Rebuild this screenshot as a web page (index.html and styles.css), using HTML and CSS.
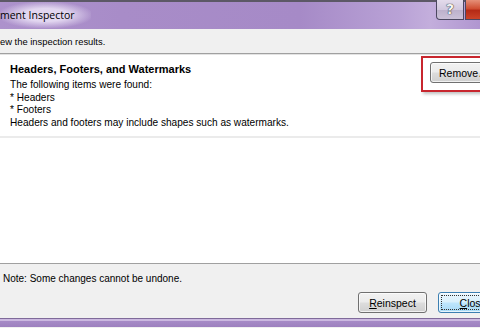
FILE: index.html
```html
<!DOCTYPE html>
<html>
<head>
  <title>Document Inspector</title>
  <meta charset="UTF-8">
  <link rel="stylesheet" href="styles.css">
</head>
<body>
  <div class="dialog">
    <div class="titlebar">
      <span class="title">ment Inspector</span>
      <div class="caption-buttons">
        <span class="cap-btn help">?</span>
        <span class="cap-btn close-btn"></span>
      </div>
    </div>

    <div class="intro">ew the inspection results.</div>

    <div class="results">
      <div class="item">
        <div class="item-text">
          <h2>Headers, Footers, and Watermarks</h2>
          <p>The following items were found:<br>
          * Headers<br>
          * Footers<br>
          Headers and footers may include shapes such as watermarks.</p>
        </div>
        <div class="highlight">
          <button class="button">Remove All</button>
        </div>
      </div>
    </div>

    <div class="footer">
      <div class="note">Note: Some changes cannot be undone.</div>
      <div class="footer-buttons">
        <button class="button"><u>R</u>einspect</button>
        <button class="button focused"><span class="focus-ring"><u>C</u>lose</span></button>
      </div>
    </div>

    <div class="frame-bottom"></div>
  </div>
</body>
</html>
```

FILE: styles.css
```css
body {
  margin: 0;
  width: 480px;
  height: 328px;
  overflow: hidden;
  background: #f0f0f0;
  font-family: "Liberation Sans", Arial, sans-serif;
  font-size: 10px;
  color: #000;
}

.dialog {
  width: 530px;
  height: 328px;
  display: flex;
  flex-direction: column;
}

.titlebar {
  height: 27px;
  border-top: 2px solid #5c5866;
  display: flex;
  align-items: flex-start;
  background: linear-gradient(90deg, #ad92cc 0px, #a88cc8 120px, #a68ac7 300px, #b9a2d6 400px, #c3aedc 430px, #b096d0 480px);
}

.title {
  font-family: "Open Sans", "Noto Sans", sans-serif;
  font-size: 10.5px;
  line-height: 26px;
  color: #000;
  padding-right: 16px;
  background: radial-gradient(ellipse at center, rgba(232, 222, 244, 0.9) 35%, rgba(232, 222, 244, 0) 75%);
}

.caption-buttons {
  display: flex;
  gap: 1px;
  margin: -2px 0 0 auto;
  padding-right: 20px;
}

.cap-btn {
  display: block;
  flex: none;
  height: 19px;
  border: 1px solid #4c4760;
  border-top: 0;
}

.help {
  width: 26px;
  border-radius: 0 0 0 4px;
  background: linear-gradient(#e3dbeb, #d2c8de 50%, #bcb0cb 51%, #cbc1d8);
  color: #f4f4f4;
  font-family: "DejaVu Sans", sans-serif;
  font-weight: bold;
  font-size: 14px;
  line-height: 19px;
  text-align: center;
  text-shadow: 0 0 1px #222, 0 0 1px #222;
}

.close-btn {
  width: 43px;
  border-radius: 0 0 4px 0;
  background: linear-gradient(#e58f78, #cf4f33 45%, #b52a16 55%, #cc4328);
}

.intro {
  height: 25px;
  line-height: 26px;
  font-size: 9.4px;
  border-bottom: 1px solid #a0a0a0;
  box-sizing: border-box;
}

.results {
  background: #fff;
  height: 210px;
  border-top: 1px solid #e3e3e3;
  border-bottom: 1px solid #a0a0a0;
  box-sizing: border-box;
}

.item {
  display: flex;
  justify-content: space-between;
  align-items: flex-start;
  height: 83px;
  border-bottom: 2px solid #ebebeb;
  box-sizing: border-box;
  padding-left: 10px;
}

.item-text h2 {
  margin: 7px 0 3px;
  font-size: 11px;
  font-weight: bold;
  line-height: 14px;
}

.item-text p {
  margin: 0;
  line-height: 12.7px;
  font-size: 10.1px;
}

.highlight {
  margin-top: 1px;
  margin-right: 10px;
  border: 2px solid #c8262e;
  padding: 4px 8px 7px 7px;
  box-shadow: 2px 2px 3px rgba(0, 0, 0, 0.25);
}

.button {
  font-family: "Liberation Sans", Arial, sans-serif;
  font-size: 10.5px;
  height: 21px;
  padding: 0 8px;
  border: 1px solid #707070;
  border-radius: 3px;
  background: linear-gradient(#f2f2f2, #ebebeb 48%, #dddddd 52%, #cfcfcf);
  color: #000;
  box-shadow: inset 0 0 0 1px rgba(255, 255, 255, 0.7);
}

.highlight .button {
  width: 80px;
  text-align: left;
  word-spacing: -1px;
}

.footer {
  height: 54px;
  display: flex;
  flex-direction: column;
  justify-content: space-between;
}

.note {
  padding: 9px 0 0 3px;
}

.footer-buttons {
  display: flex;
  justify-content: flex-end;
  gap: 11px;
  padding: 0 22px 5px 0;
}

.footer-buttons .button {
  width: 69px;
}

.footer-buttons .focused {
  width: 70px;
  border-color: #3c7fb1;
  background: linear-gradient(#eaf6fd, #d9f0fc 48%, #bee6fd 52%, #a7d9f5);
  padding: 2px;
}

.focus-ring {
  display: block;
  height: 100%;
  border: 1px dotted #333;
  box-sizing: border-box;
  line-height: 14px;
}

.frame-bottom {
  height: 9px;
  background: linear-gradient(#7f6a9a 0, #7f6a9a 1px, #cbb8e0 1px, #cbb8e0 3px, #a68ac6 3px, #9d80bf 9px);
}
```
